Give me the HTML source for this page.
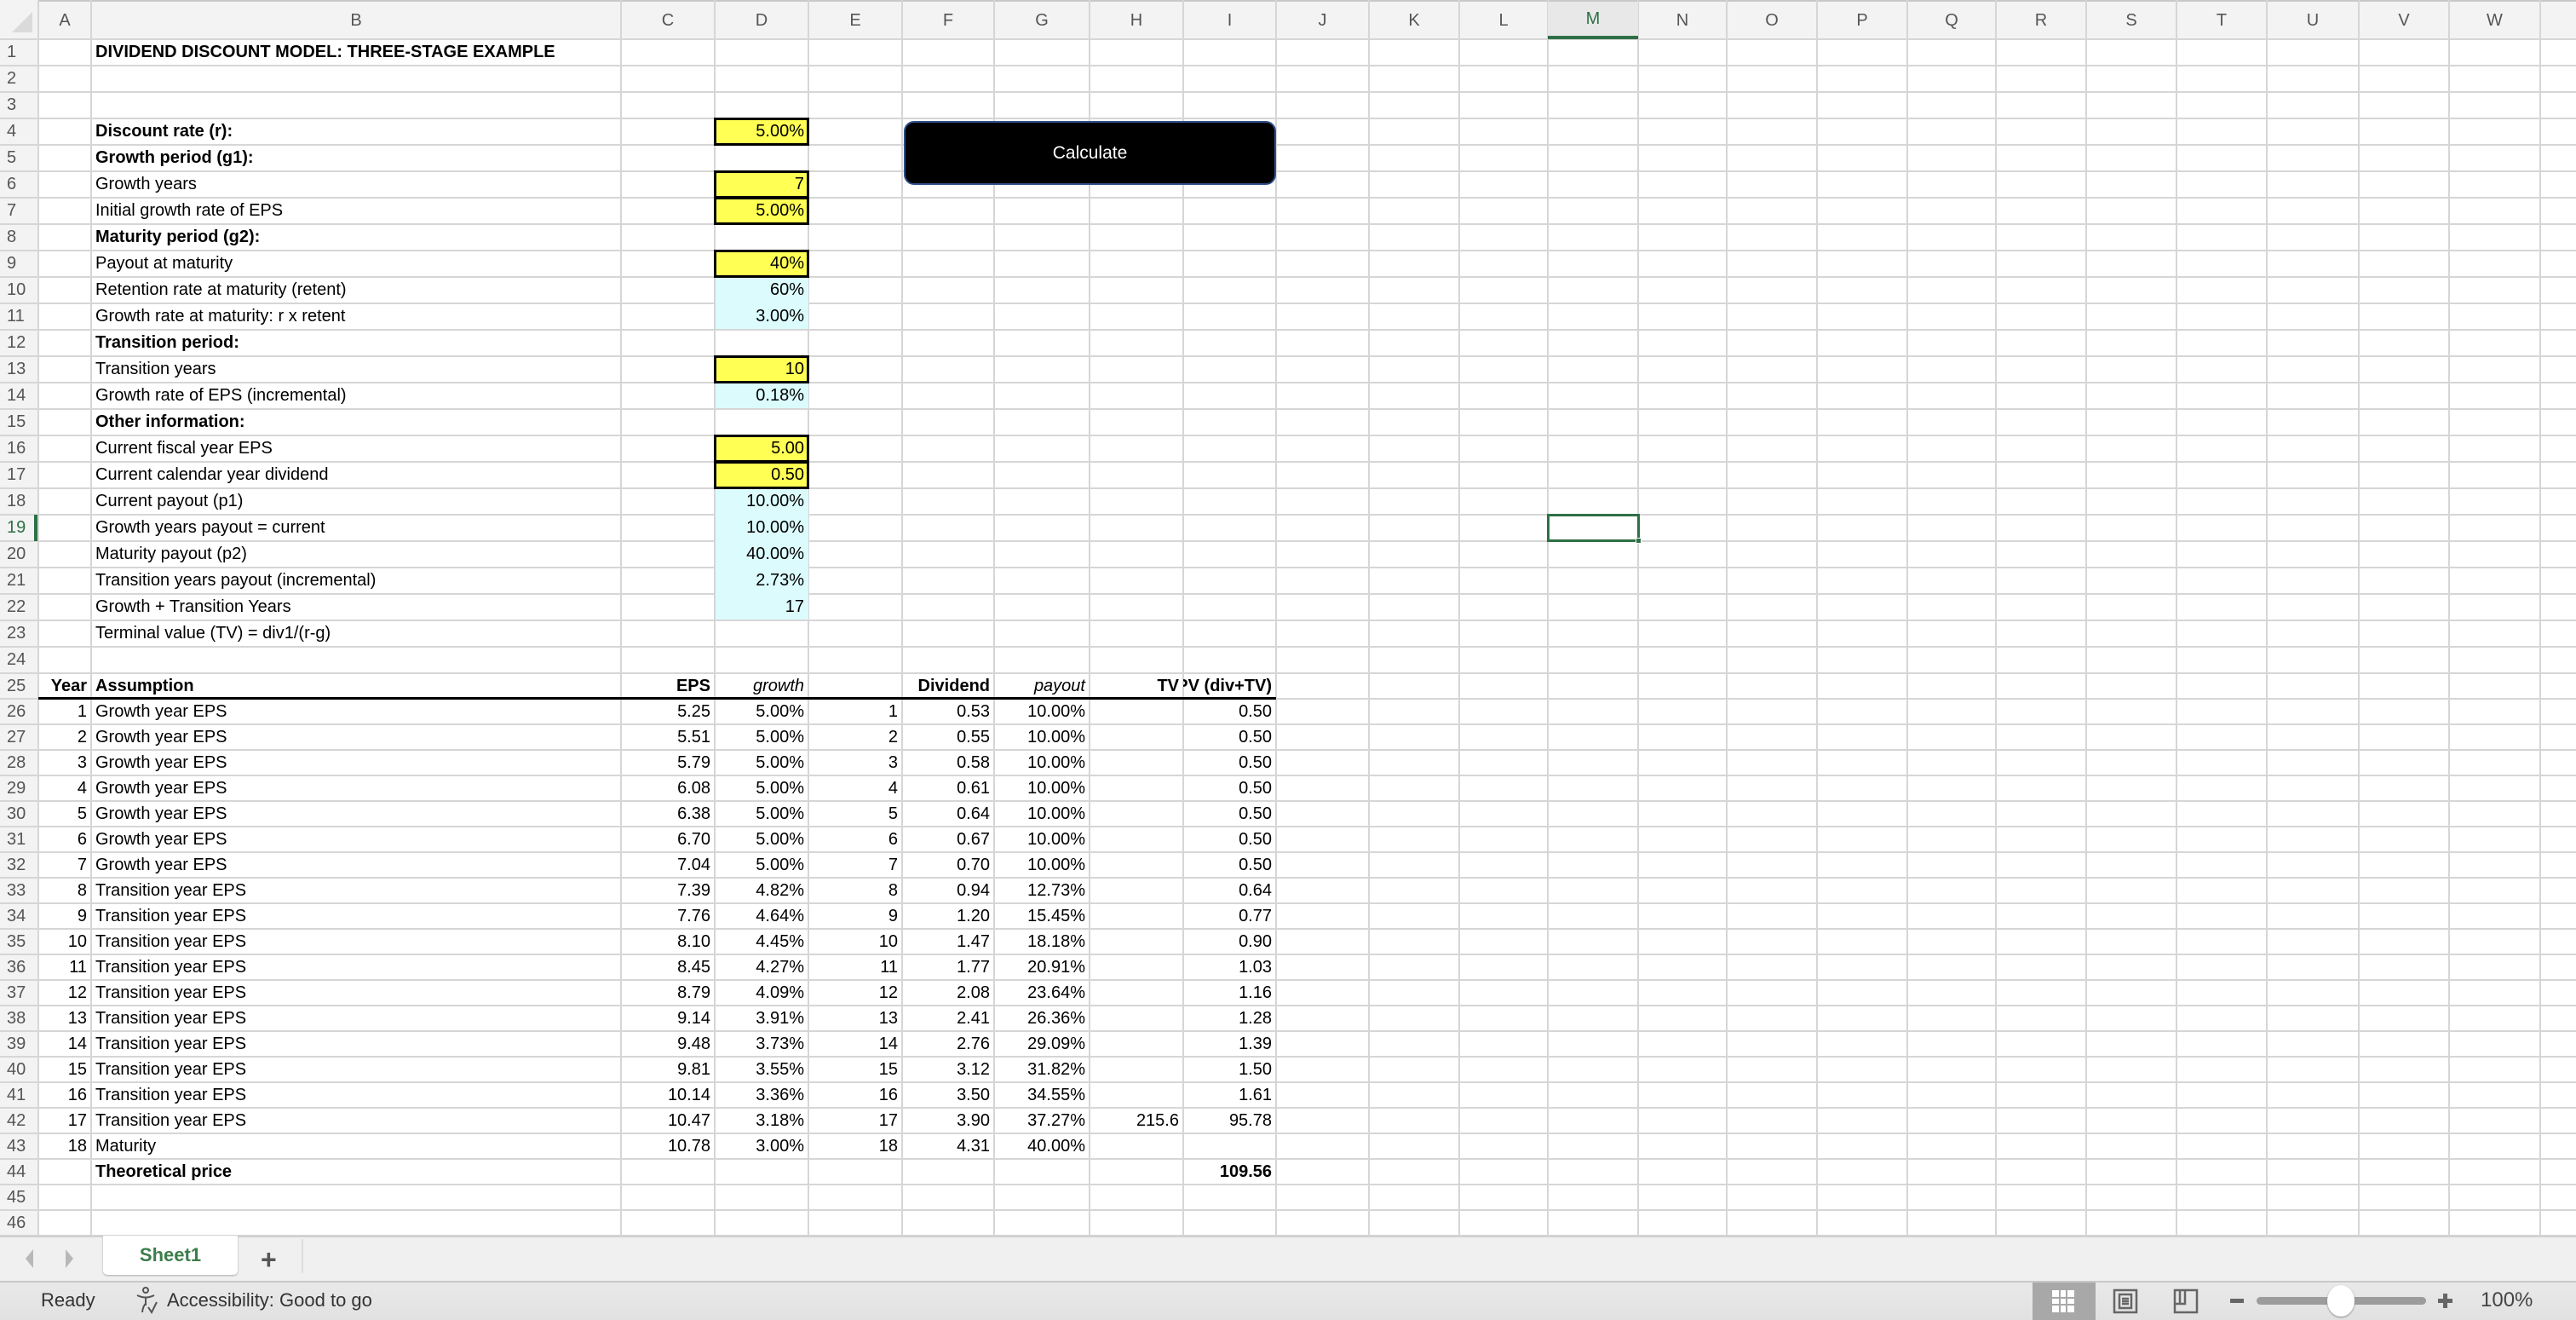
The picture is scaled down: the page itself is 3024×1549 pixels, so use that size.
<!DOCTYPE html>
<html><head><meta charset="utf-8">
<style>
*{margin:0;padding:0;box-sizing:border-box}
body{width:3024px;height:1549px;overflow:hidden;background:#fff;font-family:"Liberation Sans",Arial,sans-serif;position:relative}
.c{position:absolute;font-size:20px;color:#000;white-space:nowrap;overflow:hidden;display:flex;align-items:center;padding:0 5px}
.r{justify-content:flex-end}
.b{font-weight:bold}
.i{font-style:italic}
.vl{position:absolute;top:0;width:2px;background:#d6d6d6;height:1450px}
.hl{position:absolute;left:0;height:2px;background:#d6d6d6;width:3024px}
.hd{position:absolute;color:#555;font-size:20px;display:flex;align-items:center;justify-content:center}
</style></head><body>
<div id="g"></div>
<div style="position:absolute;left:1061px;top:142px;width:437px;height:75px;background:#000;border:2px solid #2f4f8a;border-radius:12px;color:#fff;font-size:21px;display:flex;align-items:center;justify-content:center">Calculate</div>
<div style="position:absolute;left:0;top:1450px;width:3024px;height:53px;background:#f0f0f0;border-top:2px solid #d0d0d0"></div>
<div style="position:absolute;left:30px;top:1466px;width:0;height:0;border-top:11px solid transparent;border-bottom:11px solid transparent;border-right:9px solid #b8b8b8"></div>
<div style="position:absolute;left:77px;top:1466px;width:0;height:0;border-top:11px solid transparent;border-bottom:11px solid transparent;border-left:9px solid #b8b8b8"></div>
<div style="position:absolute;left:121px;top:1450px;width:158px;height:46px;background:#fff;border-radius:0 0 5px 5px;box-shadow:0 1px 2px #aaa;color:#3b7d4a;font-weight:bold;font-size:22px;display:flex;align-items:center;justify-content:center">Sheet1</div>
<div style="position:absolute;left:306px;top:1460px;font-size:32px;color:#555;font-weight:bold">+</div>
<div style="position:absolute;left:354px;top:1454px;width:2px;height:40px;background:#ddd"></div>
<div style="position:absolute;left:0;top:1503px;width:3024px;height:46px;background:linear-gradient(#e9e9e9,#e1e1e1);border-top:2px solid #c8c8c8"></div>
<div style="position:absolute;left:48px;top:1513px;font-size:22px;color:#333">Ready</div>
<svg style="position:absolute;left:156px;top:1508px" width="36" height="36" viewBox="0 0 36 36" fill="none" stroke="#555" stroke-width="2"><circle cx="15" cy="6" r="3"/><path d="M5 12 Q15 17 25 12 M15 15 V24 M11 32 Q12 24 15 22 M18 26 l4 6 l6 -12"/></svg>
<div style="position:absolute;left:196px;top:1513px;font-size:22px;color:#333">Accessibility: Good to go</div>
<div style="position:absolute;left:2386px;top:1505px;width:74px;height:44px;background:#a8a8a8"></div>
<svg style="position:absolute;left:2408px;top:1513px" width="28" height="28" viewBox="0 0 28 28"><rect x="1" y="1" width="26" height="26" fill="#fff"/><g fill="#a8a8a8"><rect x="9" y="1" width="2" height="26"/><rect x="17" y="1" width="2" height="26"/><rect x="1" y="9" width="26" height="2"/><rect x="1" y="17" width="26" height="2"/></g></svg>
<svg style="position:absolute;left:2480px;top:1512px" width="30" height="30" viewBox="0 0 30 30" fill="none" stroke="#666" stroke-width="2.5"><rect x="2" y="2" width="26" height="26"/><rect x="8" y="7" width="14" height="16"/><path d="M11 12h8M11 15h8M11 18h8"/></svg>
<svg style="position:absolute;left:2551px;top:1512px" width="30" height="30" viewBox="0 0 30 30" fill="none" stroke="#666" stroke-width="2.5"><path d="M2 2h26v26h-26z M14 2v16h-12"/><path d="M8 2v16"/></svg>
<div style="position:absolute;left:2618px;top:1524px;width:16px;height:5px;background:#666"></div>
<div style="position:absolute;left:2649px;top:1522px;width:199px;height:9px;border-radius:5px;background:#9c9c9c"></div>
<div style="position:absolute;left:2732px;top:1508px;width:32px;height:37px;border-radius:50%;background:#fff;box-shadow:0 1px 2px #888"></div>
<div style="position:absolute;left:2862px;top:1524px;width:17px;height:5px;background:#666"></div>
<div style="position:absolute;left:2868px;top:1518px;width:5px;height:17px;background:#666"></div>
<div style="position:absolute;left:2912px;top:1512px;font-size:24px;color:#444">100%</div>
<script>
(function(){
var cols=[[0,45],['A',45,107],['B',107,729],['C',729,839],['D',839,949],['E',949,1059],['F',1059,1167],['G',1167,1279],['H',1279,1389],['I',1389,1498],['J',1498,1607],['K',1607,1713],['L',1713,1817],['M',1817,1923],['N',1923,2027],['O',2027,2133],['P',2133,2239],['Q',2239,2343],['R',2343,2449],['S',2449,2555],['T',2555,2661],['U',2661,2769],['V',2769,2875],['W',2875,2982],['X',2982,3090]];
var C={};cols.slice(1).forEach(function(c){C[c[0]]=[c[1],c[2]]});
function rt(r){return r<=25?46+31*(r-1):790+30*(r-25)}
function ht(r){return r<25?31:30}
var h='';
h+='<div style="position:absolute;left:0;top:0;width:3024px;height:46px;background:#f3f3f3;border-top:2px solid #c8c8c8"></div>';
h+='<div style="position:absolute;left:0;top:0;width:45px;height:1450px;background:#f3f3f3"></div>';
h+='<div style="position:absolute;left:14px;top:14px;width:0;height:0;border-left:24px solid transparent;border-bottom:24px solid #dadada"></div>';
function fill(col,r1,r2,bg){var x=C[col];h+='<div style="position:absolute;left:'+(x[0]+1)+'px;top:'+rt(r1)+'px;width:'+(x[1]-x[0]-1)+'px;height:'+(rt(r2)+ht(r2)-rt(r1)-1)+'px;background:'+bg+'"></div>';}
var blue='#dcfbfd';
cols.forEach(function(c){var x=c.length==2?c[1]:c[2];h+='<div class="vl" style="left:'+(x-1)+'px"></div>';});
for(var r=1;r<=46;r++){h+='<div class="hl" style="top:'+(rt(r)-1)+'px"></div>';}
h+='<div class="hl" style="top:1449px"></div>';
fill('D',10,11,blue);fill('D',14,14,blue);fill('D',18,22,blue);
cols.slice(1).forEach(function(c){var sel=c[0]=='M';h+='<div class="hd" style="left:'+c[1]+'px;top:2px;width:'+(c[2]-c[1])+'px;height:44px;'+(sel?'color:#2e7046;background:#e8e8e8;border-bottom:4px solid #2e7046':'')+'">'+c[0]+'</div>';});
for(var r=1;r<=46;r++){var sel=r==19;h+='<div class="hd" style="left:0;top:'+rt(r)+'px;width:44px;height:'+ht(r)+'px;justify-content:flex-start;padding-left:8px;'+(sel?'color:#2e7046;border-right:4px solid #2e7046':'')+'">'+r+'</div>';}
[4,6,7,9,13,16,17].forEach(function(r){var x=C.D;h+='<div style="position:absolute;left:'+(x[0]-1)+'px;top:'+(rt(r)-1)+'px;width:'+(x[1]-x[0]+2)+'px;height:'+(ht(r)+2)+'px;background:#ffff54;border:3px solid #000"></div>';});
function cell(col,r,t,cls){var x=C[col];h+='<div class="c '+(cls||'')+'" style="left:'+x[0]+'px;top:'+rt(r)+'px;width:'+(x[1]-x[0])+'px;height:'+ht(r)+'px">'+t+'</div>';}
h+='<div class="c b" style="left:107px;top:46px;width:800px;height:31px">DIVIDEND DISCOUNT MODEL: THREE-STAGE EXAMPLE</div>';
var L=[[4,'Discount rate (r):',1,'5.00%'],[5,'Growth period (g1):',1],[6,'Growth years',0,'7'],[7,'Initial growth rate of EPS',0,'5.00%'],[8,'Maturity period (g2):',1],[9,'Payout at maturity',0,'40%'],[10,'Retention rate at maturity (retent)',0,'60%'],[11,'Growth rate at maturity: r x retent',0,'3.00%'],[12,'Transition period:',1],[13,'Transition years',0,'10'],[14,'Growth rate of EPS (incremental)',0,'0.18%'],[15,'Other information:',1],[16,'Current fiscal year EPS',0,'5.00'],[17,'Current calendar year dividend',0,'0.50'],[18,'Current payout (p1)',0,'10.00%'],[19,'Growth years payout = current',0,'10.00%'],[20,'Maturity payout (p2)',0,'40.00%'],[21,'Transition years payout (incremental)',0,'2.73%'],[22,'Growth + Transition Years',0,'17'],[23,'Terminal value (TV) = div1/(r-g)',0]];
L.forEach(function(a){cell('B',a[0],a[1],a[2]?'b':'');if(a[3])cell('D',a[0],a[3],'r');});
cell('A',25,'Year','b r');cell('B',25,'Assumption','b');cell('C',25,'EPS','b r');cell('D',25,'growth','i r');cell('F',25,'Dividend','b r');cell('G',25,'payout','i r');cell('H',25,'TV','b r');cell('I',25,'PV (div+TV)','b r');
h+='<div style="position:absolute;left:45px;top:818px;width:1453px;height:3px;background:#000"></div>';
var D=[['5.25','5.00%','0.53','10.00%','0.50'],['5.51','5.00%','0.55','10.00%','0.50'],['5.79','5.00%','0.58','10.00%','0.50'],['6.08','5.00%','0.61','10.00%','0.50'],['6.38','5.00%','0.64','10.00%','0.50'],['6.70','5.00%','0.67','10.00%','0.50'],['7.04','5.00%','0.70','10.00%','0.50'],['7.39','4.82%','0.94','12.73%','0.64'],['7.76','4.64%','1.20','15.45%','0.77'],['8.10','4.45%','1.47','18.18%','0.90'],['8.45','4.27%','1.77','20.91%','1.03'],['8.79','4.09%','2.08','23.64%','1.16'],['9.14','3.91%','2.41','26.36%','1.28'],['9.48','3.73%','2.76','29.09%','1.39'],['9.81','3.55%','3.12','31.82%','1.50'],['10.14','3.36%','3.50','34.55%','1.61'],['10.47','3.18%','3.90','37.27%','95.78'],['10.78','3.00%','4.31','40.00%','']];
D.forEach(function(d,k){var r=26+k,n=k+1;cell('A',r,n,'r');cell('B',r,n<=7?'Growth year EPS':(n<18?'Transition year EPS':'Maturity'));cell('C',r,d[0],'r');cell('D',r,d[1],'r');cell('E',r,n,'r');cell('F',r,d[2],'r');cell('G',r,d[3],'r');if(d[4])cell('I',r,d[4],'r');});
cell('H',42,'215.6','r');
cell('B',44,'Theoretical price','b');cell('I',44,'109.56','b r');
h+='<div style="position:absolute;left:1816px;top:'+(rt(19)-1)+'px;width:109px;height:33px;border:3px solid #2e7046"></div>';
h+='<div style="position:absolute;left:1920px;top:'+(rt(19)+27)+'px;width:7px;height:7px;background:#2e7046;border:1px solid #fff"></div>';
document.getElementById('g').innerHTML=h;
})();
</script>
</body></html>
